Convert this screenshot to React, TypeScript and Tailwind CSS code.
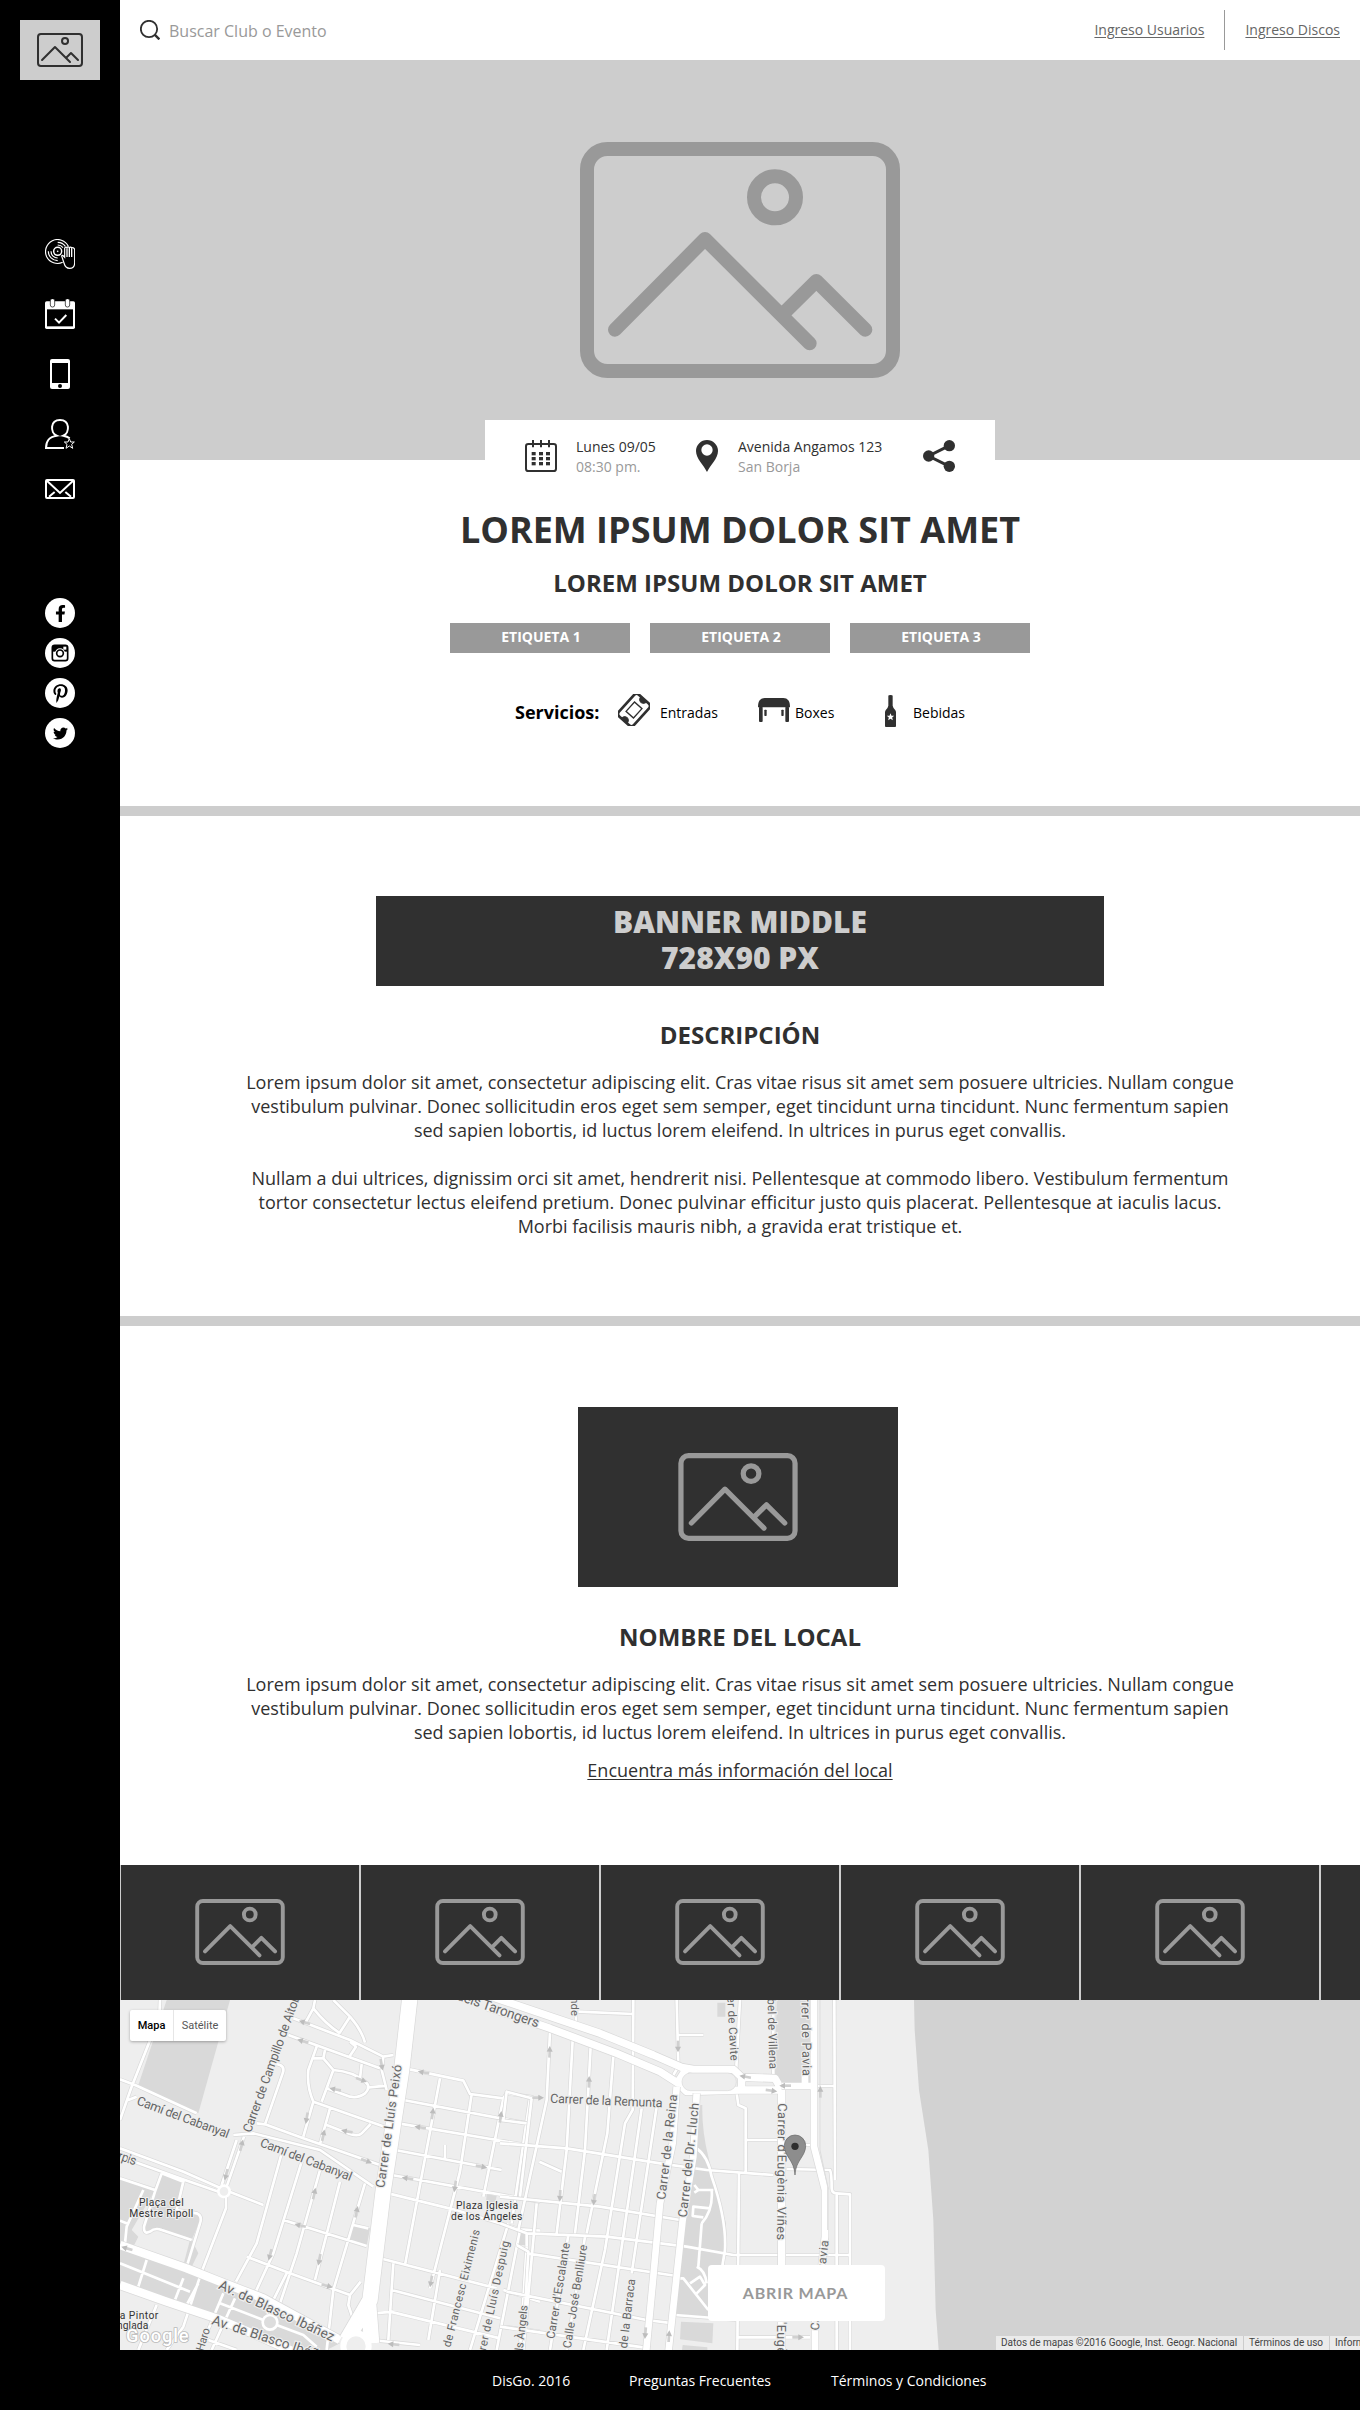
import React from "react";
import { FaFacebookF, FaPinterestP, FaTwitter } from "react-icons/fa";

function Picture({ className, stroke = 42 }: { className: string; stroke?: number }) {
  return (
    <svg viewBox="0 0 960 708" className={className} fill="none" stroke="currentColor" strokeWidth={stroke} strokeLinecap="round" strokeLinejoin="round">
      <rect x="21" y="21" width="918" height="666" rx="61" />
      <circle cx="585" cy="166" r="63" />
      <path d="M105 563L375 291L689 604M615 510L709 417L856 563" />
    </svg>
  );
}

function DiscIcon() {
  return (
    <svg viewBox="0 0 90 90" className="h-[30px] w-[30px]" fill="none" stroke="#fff" strokeWidth="3.5">
      <path d="M70 22A36 36 0 1 0 53 70" />
      <circle cx="38" cy="37" r="12" strokeWidth="4.5" />
      <circle cx="38" cy="37" r="2.5" fill="#fff" stroke="none" />
      <path d="M38 10a28 28 0 0 1 23 12M38 18a20 20 0 0 1 16 8M10 37a28 28 0 0 0 28 28M18 37a20 20 0 0 0 20 20" />
      <path d="M57 72L50 51q2-5 7 2l2 2V28q3-6 7-2 3-5 7 0 4-4 7 1 3-3 6 0 3 2 3 6v38q0 17-15 17-13 0-17-16z" fill="#000" />
      <path d="M66 28v26M73 27v27M80 28v26" strokeWidth="4" />
    </svg>
  );
}

function DateCheckIcon() {
  return (
    <svg viewBox="0 0 90 90" className="h-[30px] w-[30px]">
      <rect y="7" width="90" height="83" rx="5" fill="#fff" />
      <path d="M6 31h78v51H6z" fill="#000" />
      <rect x="16" y="-1" width="13" height="25" rx="6" fill="#fff" stroke="#000" strokeWidth="2" />
      <rect x="61" y="-1" width="13" height="25" rx="6" fill="#fff" stroke="#000" strokeWidth="2" />
      <path d="M30 59l12 12 22-23" fill="none" stroke="#fff" strokeWidth="6" />
    </svg>
  );
}

function PhoneIcon() {
  return (
    <svg viewBox="0 0 60 90" className="h-[30px] w-5">
      <rect width="60" height="90" rx="6" fill="#fff" />
      <path d="M6 12h48v60H6z" fill="#000" />
      <circle cx="30" cy="81" r="6" fill="#000" />
    </svg>
  );
}

function UserStarIcon() {
  return (
    <svg viewBox="0 0 90 90" className="h-[30px] w-[30px]" fill="none" stroke="#fff" strokeWidth="6">
      <path d="M57 87H3C3 65 12 54 35 50 15 41 15 3 45 3s30 38 10 47q12 2 19 8" />
      <path d="M73 59l4 10h11l-8 7 3 12-10-7-10 7 3-12-8-7h11z" strokeWidth="3" fill="#000" />
    </svg>
  );
}

function MailIcon() {
  return (
    <svg viewBox="0 0 90 60" className="h-5 w-[30px]" fill="none" stroke="#fff" strokeWidth="6">
      <rect x="3" y="3" width="84" height="54" rx="3" />
      <path d="M4 4l41 38L86 4M12 53l17-14M78 53L61 39" />
    </svg>
  );
}

function InstagramIcon() {
  return (
    <svg viewBox="0 0 54 54" className="h-[18px] w-[18px]">
      <rect x="4" y="4" width="46" height="46" rx="7" fill="none" stroke="#000" strokeWidth="5" />
      <path d="M4 6h46v17H4z" fill="#000" />
      <rect x="37" y="8" width="9" height="9" fill="#fff" />
      <circle cx="27" cy="28" r="15" fill="#fff" />
      <circle cx="27" cy="28" r="10" fill="none" stroke="#000" strokeWidth="5" />
    </svg>
  );
}

function Sidebar() {
  return (
    <aside className="flex w-[120px] shrink-0 flex-col items-center bg-black pt-5">
      <div className="flex h-[60px] w-20 items-center justify-center bg-[#cdcdcd] text-[#303030]">
        <Picture className="h-[34px] w-[46px]" />
      </div>
      <nav className="mt-[159px] flex flex-col items-center gap-[30px]">
        <DiscIcon />
        <DateCheckIcon />
        <PhoneIcon />
        <UserStarIcon />
        <MailIcon />
      </nav>
      <div className="mt-[99px] flex flex-col gap-2.5 text-black">
        {[<FaFacebookF size={17} />, <InstagramIcon />, <FaPinterestP size={19} />, <FaTwitter size={15} />].map((icon, i) => (
          <a key={i} className="flex h-[30px] w-[30px] items-center justify-center rounded-full bg-white">{icon}</a>
        ))}
      </div>
    </aside>
  );
}

function Header() {
  return (
    <header className="flex h-[60px] items-center bg-white px-5">
      <svg viewBox="0 0 60 60" className="h-5 w-5" fill="none" stroke="#303030" strokeWidth="5.5">
        <circle cx="27" cy="27" r="24.5" />
        <path d="M44 44l14 14" strokeWidth="7" />
      </svg>
      <span className="ml-[9px] pt-0.5 text-base text-[#999]">Buscar Club o Evento</span>
      <div className="ml-auto flex items-center text-sm text-[#666]">
        <a className="underline underline-offset-2">Ingreso Usuarios</a>
        <span className="mx-5 h-10 w-px bg-[#999]" />
        <a className="underline underline-offset-2">Ingreso Discos</a>
      </div>
    </header>
  );
}

function CalendarIcon() {
  return (
    <svg viewBox="0 0 96 96" className="h-8 w-8 shrink-0" fill="none" stroke="#303030" strokeWidth="6">
      <rect x="3" y="12" width="90" height="81" rx="7" />
      <path d="M24 0v22M48 0v22M72 0v22" />
      <g fill="#303030" stroke="none">
        {[20, 42, 63].map((x) => [36, 51, 66].map((y) => <rect key={x + "-" + y} x={x} y={y} width="12" height="10" />))}
      </g>
    </svg>
  );
}

function PinIcon() {
  return (
    <svg viewBox="0 0 66 96" className="h-8 w-[22px] shrink-0">
      <path d="M33 0A33 33 0 0 0 0 33C0 56 23 75 33 96 43 75 66 56 66 33A33 33 0 0 0 33 0zM33 13a17 17 0 1 1 0 34 17 17 0 0 1 0-34z" fill="#303030" />
    </svg>
  );
}

function ShareIcon() {
  return (
    <svg viewBox="0 0 96 96" className="h-8 w-8 shrink-0" fill="#303030">
      <path d="M79 17L17 48l62 31" fill="none" stroke="#303030" strokeWidth="9" />
      <circle cx="79" cy="17" r="17" />
      <circle cx="17" cy="48" r="17" />
      <circle cx="79" cy="79" r="17" />
    </svg>
  );
}

function TicketIcon() {
  return (
    <svg viewBox="0 0 96 96" className="h-8 w-8 shrink-0" fill="none" stroke="#303030">
      <g transform="rotate(-48 48 48)">
        <rect x="4" y="18" width="88" height="60" rx="10" strokeWidth="8" />
        <path d="M6 37a11 11 0 0 1 0 22zM90 37a11 11 0 0 0 0 22z" fill="#303030" strokeWidth="3" />
        <rect x="29" y="33" width="38" height="30" strokeWidth="4" />
      </g>
    </svg>
  );
}

function TableIcon() {
  return (
    <svg viewBox="0 0 96 72" className="h-6 w-8 shrink-0" fill="#303030">
      <path d="M20 0h56q10 0 15 7 5 6 5 21H0Q0 13 5 7 10 0 20 0z" />
      <rect x="3" y="26" width="11" height="46" rx="3" />
      <rect x="19" y="35" width="7" height="19" rx="2" />
      <rect x="70" y="35" width="7" height="19" rx="2" />
      <rect x="82" y="26" width="11" height="46" rx="3" />
    </svg>
  );
}

function BottleIcon() {
  return (
    <svg viewBox="0 0 33 96" className="relative top-px h-8 w-[11px] shrink-0">
      <path d="M10 2q0-2 6.500-2T23 2v30q1 6 7 12 3 4 3 8v42q0 2-3 2H3q-3 0-3-2V52q0-4 3-8 6-6 7-12z" fill="#303030" />
      <path d="M16.500 55l3 7 8 .5-6 5 2 8-7-4.500-7 4.500 2-8-6-5 8-.5z" fill="#fff" />
    </svg>
  );
}

const para1 = [
  "Lorem ipsum dolor sit amet, consectetur adipiscing elit. Cras vitae risus sit amet sem posuere ultricies. Nullam congue",
  "vestibulum pulvinar. Donec sollicitudin eros eget sem semper, eget tincidunt urna tincidunt. Nunc fermentum sapien",
  "sed sapien lobortis, id luctus lorem eleifend. In ultrices in purus eget convallis.",
];
const para2 = [
  "Nullam a dui ultrices, dignissim orci sit amet, hendrerit nisi. Pellentesque at commodo libero. Vestibulum fermentum",
  "tortor consectetur lectus eleifend pretium. Donec pulvinar efficitur justo quis placerat. Pellentesque at iaculis lacus.",
  "Morbi facilisis mauris nibh, a gravida erat tristique et.",
];

function Paragraph({ lines }: { lines: string[] }) {
  return (
    <p className="text-center text-lg leading-6 whitespace-nowrap">
      {lines.map((l) => <span key={l} className="block">{l}</span>)}
    </p>
  );
}

function EventInfo() {
  return (
    <section className="flex h-[346px] flex-col items-center">
      <div className="z-10 -mt-10 flex h-20 w-[510px] shrink-0 items-start bg-white px-10 pt-5 text-sm leading-5">
        <CalendarIcon />
        <div className="-mt-[3px] ml-[19px] w-[120px]">
          <p>Lunes 09/05</p>
          <p className="text-[#999]">08:30 pm.</p>
        </div>
        <PinIcon />
        <div className="-mt-[3px] ml-5 whitespace-nowrap">
          <p>Avenida Angamos 123</p>
          <p className="text-[#999]">San Borja</p>
        </div>
        <div className="ml-auto"><ShareIcon /></div>
      </div>
      <h1 className="mt-2.5 text-4xl leading-10 font-bold whitespace-nowrap">LOREM IPSUM DOLOR SIT AMET</h1>
      <h2 className="mt-[17px] text-2xl leading-8 font-bold whitespace-nowrap">LOREM IPSUM DOLOR SIT AMET</h2>
      <div className="mt-6 flex gap-5">
        {["ETIQUETA 1", "ETIQUETA 2", "ETIQUETA 3"].map((t) => (
          <span key={t} className="h-[30px] w-[180px] bg-[#999] pl-0.5 text-center text-sm leading-7 font-bold text-white">{t}</span>
        ))}
      </div>
      <div className="mt-[41px] flex h-8 w-[450px] items-center text-sm text-black">
        <span className="w-[103px] shrink-0 pt-[3px] text-lg leading-6 font-bold">Servicios:</span>
        <TicketIcon />
        <span className="ml-2.5 w-[98px] shrink-0 pt-[5px]">Entradas</span>
        <TableIcon />
        <span className="ml-[5px] w-[90px] shrink-0 pt-[5px]">Boxes</span>
        <BottleIcon />
        <span className="ml-[17px] pt-[5px]">Bebidas</span>
      </div>
    </section>
  );
}

type LabelProps = { from: [number, number]; to: [number, number]; text: string; size?: number };

function Street({ from, to, text, size = 38 }: LabelProps) {
  const dx = to[0] - from[0];
  const dy = to[1] - from[1];
  return (
    <text
      transform={`translate(${from[0]} ${from[1]}) rotate(${(Math.atan2(dy, dx) * 180) / Math.PI})`}
      textLength={Math.hypot(dx, dy)}
      fontSize={size}
      fill="#666"
      stroke="#eee"
      strokeWidth="7"
      paintOrder="stroke"
    >
      {text}
    </text>
  );
}

function Roads({ d, width, casing = 4 }: { d: string; width: number; casing?: number }) {
  return (
    <g fill="none" strokeLinejoin="round">
      <path d={d} stroke="#d9d9d9" strokeWidth={width + casing} />
      <path d={d} stroke="#fff" strokeWidth={width} />
    </g>
  );
}

function Arrow({ x, y, angle }: { x: number; y: number; angle: number }) {
  return (
    <g transform={`translate(${x} ${y}) rotate(${angle})`}>
      <path d="M-18-4H2v8h-20z" fill="#d0d0d0" />
      <path d="M0-9L17 0 0 9z" fill="#bdbdbd" />
    </g>
  );
}

const minorLeft =
  "M120 30L118 80 35 290 0 390M0 268L45 285 230 370M25 330L50 320M0 475L190 545 315 600 430 645M0 500L180 565 300 607M0 565L105 600M125 550L105 605 72 710Q70 735 90 725 105 712 125 720L215 750M125 550L190 575 170 660 230 670Q248 678 240 700L200 830M70 600L20 710 15 760M0 692L25 702" +
  "M585 30L580 55Q615 100 660 130M580 55L558 95M640 30L690 80Q725 120 735 158M690 80L658 130M520 85L690 150 790 200 820 195M505 135L780 235M690 155L708 170 688 200M690 150L705 168M790 200L785 240 800 300M590 170L565 240Q560 290 580 335L550 440M615 180L610 205 640 240 605 335M610 205L580 205M640 240Q700 245 735 275 755 290 735 310 715 325 690 320L620 295M725 222L720 265M740 293L800 287M580 335L815 418M630 355L600 462M620 405L690 432Q715 440 725 430L752 402" +
  "M445 215L480 225Q495 232 488 250L435 403 550 445 780 525M410 400L435 403M340 435L400 430 600 480 760 590M372 440L320 590M350 450L305 585M318 620V655L245 845 190 1010 140 1080M485 490L410 760 348 875M545 515L460 790 405 910M600 540L530 790 480 940M660 575L585 870M735 580L640 900 620 1080M490 690L740 768M380 800L510 850 690 915 722 875M500 850L440 970M690 915L685 945 700 990M300 940L430 990 550 1035 590 1070M345 925L275 1080M310 910L210 1150M80 810L55 890M190 865L165 930M235 880L200 945M0 820L210 905M110 945L55 1080M265 1050L350 1080M700 705L745 715" +
  "M855 235L1030 272 1050 312 1150 325 1160 310 1240 322M850 330L1220 400M835 400L1260 472M825 480L1145 540M815 555L1260 635M805 610L1000 658 1200 718 1260 722M780 805L1130 895M960 265L855 825M1055 312L1020 545 930 895M975 505V465M1150 325L1090 620M1230 325L1175 700M820 820L805 1050M815 900L1140 985M810 965L1140 1045M760 970L820 965M755 1050L900 1065M960 840L925 1050M1165 700L1050 1080M1200 720L1130 1080M1220 770L1200 1080M1150 900L1260 935M1150 1010L1260 1025M710 1000L730 1000";

const minorRight =
  "M235 65L400 72M228 30V100M400 30L398 360 375 400 315 780 250 1080M150 125L140 330 55 720M218 150L200 480 170 730M272 170L255 480 225 730M340 200L322 430 260 730M425 355L390 600 320 1080M470 350L395 850M0 390L80 400M10 390L20 305 95 325 60 620M0 460L200 475 480 520 620 540 820 555M118 515L185 545M0 620L300 650 540 690M0 700L80 730 320 740 560 770 700 795H1050M50 765L85 785 75 960M80 790L530 858M20 905L440 990 520 1000M0 1010L450 1075M80 730V770M205 735L150 1080M255 740L200 1080M110 640L70 1080M530 30L535 230 520 255M535 135H610M710 310L715 345 737 355V545M740 450H840M717 545L712 1080M715 1042H930M590 475Q625 500 635 560 680 690 675 780L665 840M640 600L595 600 583 585M598 598L583 608M635 600Q640 660 605 700M630 655L580 650 578 678 610 682M605 700L595 830M535 865L550 865 625 960M570 880L600 860 615 885 590 910M590 830Q615 840 620 880M525 975L720 990M890 465H940M860 537L990 540Q995 550 995 595 995 610 1010 610L1050 613V1080M1003 30L1005 570M1010 610V1080M940 288H1003M720 30L708 250M820 30V270";

function CityMap() {
  return (
    <svg viewBox="0 30 3720 1050" className="block h-[350px] w-[1240px] font-['Roboto',sans-serif]">
      <rect y="30" width="3720" height="1050" fill="#eee" />
      <g fill="#d9d9d9">
        <path d="M140 30H330L235 370 55 285z" />
        <path d="M0 565L105 600 35 720 55 740 40 770 0 765z" />
        <path d="M125 550L190 575 175 660 245 680 215 750 235 790 215 830 190 825 210 750 105 715 70 730z" />
        <path d="M0 775L300 880 520 975 660 1060 620 1080 520 1080 280 985 0 880z" />
        <path d="M700 705L750 715 740 768 690 750zM1200 720H1220V765H1195zM1100 612L1130 618 1125 640 1098 635z" />
      </g>
      <g transform="translate(1140 0)" fill="#d9d9d9">
        <path d="M830 30H932V280H850L825 255z" />
        <path d="M598 345H607Q605 420 625 500 650 620 678 700L670 840 625 960 625 985 520 972 550 700 580 500z" />
        <path d="M652 38h24v42h-24zM543 995L640 1000 637 1060 540 1048zM548 1065L622 1072V1080H546z" />
      </g>
      <path d="M2382 30L2384 120 2397 300 2425 480 2440 690 2447 960 2456 1080H3720V30z" fill="#d2d2d2" />
      <Roads d={minorLeft} width={8} />
      <g transform="translate(1140 0)"><Roads d={minorRight} width={8} /></g>
      <circle cx="312" cy="604" r="17" fill="#eee" stroke="#fff" strokeWidth="8" />
      <circle cx="450" cy="997" r="22" fill="#ddd" stroke="#fff" strokeWidth="8" />
      <Roads d="M0 765L200 835 300 875 430 925 540 985 660 1050M0 885L140 935 290 985 420 1040 520 1085" width={25} />
      <Roads d="M870 20L845 240 790 600 750 930 680 1050M745 930L755 1060" width={46} />
      <circle cx="708" cy="1068" r="38" fill="#eee" stroke="#fff" strokeWidth="18" />
      <g transform="translate(1140 0)">
        <Roads d="M-40 15L300 130 460 195 545 232 580 238H700L725 262 825 265 845 300V1090M-40 50L150 115 350 190 480 245 535 280 560 305 720 300 840 300M725 262V300M560 235L535 275" width={22} />
        <rect x="546" y="249" width="163" height="53" rx="26" fill="#eee" stroke="#d9d9d9" strokeWidth="2" />
        <Roads d="M530 290L518 460 480 640 460 860 438 1090M590 310L580 500 548 690 505 1090" width={20} />
        <Roads d="M942 20V470L975 600V740L945 1000V1090M915 250V288M845 288H942" width={20} />
        <path d="M960 30V480L983 590V720" fill="none" stroke="#ddd" strokeWidth="3" />
      </g>
      <Arrow x={553} y={97} angle={196} />
      <Arrow x={548} y={153} angle={196} />
      <Arrow x={785} y={225} angle={80} />
      <Arrow x={725} y={270} angle={20} />
      <Arrow x={645} y={298} angle={190} />
      <Arrow x={560} y={385} angle={100} />
      <Arrow x={610} y={435} angle={-78} />
      <Arrow x={680} y={424} angle={190} />
      <Arrow x={740} y={513} angle={20} />
      <Arrow x={365} y={465} angle={-75} />
      <Arrow x={318} y={555} angle={105} />
      <Arrow x={583} y={610} angle={-78} />
      <Arrow x={710} y={665} angle={-78} />
      <Arrow x={540} y={706} angle={193} />
      <Arrow x={450} y={795} angle={105} />
      <Arrow x={598} y={810} angle={100} />
      <Arrow x={622} y={888} angle={15} />
      <Arrow x={910} y={247} angle={190} />
      <Arrow x={938} y={370} angle={-82} />
      <Arrow x={900} y={412} angle={188} />
      <Arrow x={1142} y={380} angle={-82} />
      <Arrow x={1085} y={530} angle={10} />
      <Arrow x={862} y={565} angle={188} />
      <Arrow x={1005} y={590} angle={98} />
      <Arrow x={933} y={875} angle={100} />
      <Arrow x={820} y={1063} angle={185} />
      <Arrow x={20} y={775} angle={196} />
      <Arrow x={1255} y={323} angle={0} />
      <Arrow x={1289} y={185} angle={-88} />
      <Arrow x={1407} y={275} angle={-88} />
      <Arrow x={1674} y={170} angle={90} />
      <Arrow x={1320} y={618} angle={93} />
      <Arrow x={1422} y={630} angle={98} />
      <Arrow x={1576} y={1030} angle={95} />
      <Arrow x={1647} y={1038} angle={-86} />
      <Arrow x={1875} y={260} angle={190} />
      <Arrow x={1955} y={302} angle={8} />
      <Arrow x={1995} y={287} angle={180} />
      <Arrow x={2101} y={305} angle={-90} />
      <Arrow x={2035} y={1042} angle={0} />

      <Street from={[392, 430]} to={[541, 20]} text="Carrer de Campillo de Altob" />
      <Street from={[793, 595]} to={[845, 226]} text="Carrer de Lluís Peixó" />
      <Street from={[48, 343]} to={[322, 445]} text="Camí del Cabanyal" />
      <Street from={[418, 468]} to={[690, 573]} text="Camí del Cabanyal" />
      <Street from={[293, 895]} to={[636, 1055]} text="Av. de Blasco Ibáñez" size={41} />
      <Street from={[273, 1002]} to={[630, 1120]} text="Av. de Blasco Ibáñez" size={41} />
      <Street from={[-8, 508]} to={[45, 526]} text="rpis" />
      <Street from={[1008, 28]} to={[1252, 113]} text="dels Tarongers" size={41} />
      <Street from={[964, 1180]} to={[1080, 722]} text="Carrer de Francesc Eiximenis" size={34} />
      <Street from={[1085, 1140]} to={[1168, 755]} text="Carrer de Lluís Despuig" size={34} />
      <Street from={[1204, 1120]} to={[1223, 947]} text="dels Àngels" size={34} />
      <Street from={[250, 1085]} to={[270, 1018]} text="Haro" size={34} />
      <g transform="translate(1140 0)">
        <Street from={[150, 338]} to={[487, 352]} text="Carrer de la Remunta" />
        <Street from={[496, 630]} to={[532, 315]} text="Carrer de la Reina" />
        <Street from={[560, 683]} to={[597, 340]} text="Carrer del Dr. Lluch" />
        <Street from={[834, 340]} to={[831, 750]} text="Carrer d'Eugènia Viñes" />
        <Street from={[831, 850]} to={[831, 1260]} text="Carrer d'Eugènia Viñes" />
        <Street from={[904, 0]} to={[908, 258]} text="arrer de Pavia" />
        <Street from={[802, 6]} to={[808, 237]} text="abel de Villena" size={35} />
        <Street from={[680, -5]} to={[692, 213]} text="rrer de Cavite" size={35} />
        <Street from={[214, 22]} to={[214, 78]} text="nde" size={34} />
        <Street from={[956, 1022]} to={[986, 752]} text="Carrer de Pavia" size={36} />
        <Street from={[163, 1048]} to={[210, 760]} text="Carrer d'Escalante" size={35} />
        <Street from={[212, 1076]} to={[262, 766]} text="Calle José Benlliure" size={35} />
        <Street from={[381, 1076]} to={[406, 868]} text="de la Barraca" size={35} />
      </g>
      <g fontSize="31" fill="#333" stroke="#eee" strokeWidth="6" paintOrder="stroke" textAnchor="middle">
        <text x="124" y="647" textLength="134">Plaça del</text>
        <text x="124" y="680" textLength="192">Mestre Ripoll</text>
        <text x="1101" y="656" textLength="186">Plaza Iglesia</text>
        <text x="1100" y="689" textLength="214">de los Ángeles</text>
        <text x="57" y="986" textLength="116">a Pintor</text>
        <text x="38" y="1018" textLength="94">nglada</text>
      </g>
      <text x="18" y="1056" fontSize="55" fontWeight="500" fill="#fff" stroke="#bbb" strokeWidth="5" paintOrder="stroke" textLength="188">Google</text>
      <g transform="translate(2025 435)">
        <path d="M0 120C-2 75-32 65-32 32a32 32 0 0 1 64 0C32 65 2 75 0 120z" fill="#8d8d8d" stroke="#666" strokeWidth="2" />
        <circle cy="34" r="11" fill="#2e2e2e" />
      </g>
    </svg>
  );
}

function MapPanel() {
  return (
    <section className="relative h-[350px] overflow-hidden">
      <CityMap />
      <div className="absolute top-2.5 left-2.5 flex h-[31px] w-24 rounded-[2px] bg-white font-['Roboto',sans-serif] text-[11px] leading-[31px] text-[#565656] shadow-[0_1px_3px_rgba(0,0,0,0.3)]">
        <b className="w-11 border-r border-[#e6e6e6] text-center font-medium text-black">Mapa</b>
        <span className="flex-1 text-center">Satélite</span>
      </div>
      <button className="absolute top-[265px] left-[588px] h-14 w-[177px] rounded-[4px] bg-white pr-0.5 pb-px text-center font-['Lato',sans-serif] text-base font-bold tracking-[0.8px] text-[#999]">ABRIR MAPA</button>
      <div className="absolute bottom-0 left-[876px] flex h-3.5 bg-[#ebebeb] font-['Roboto',sans-serif] text-[10px] leading-3.5 whitespace-nowrap text-[#444]">
        <span className="w-[247px] pl-[5px]">Datos de mapas ©2016 Google, Inst. Geogr. Nacional</span>
        <span className="w-[86px] border-l border-[#ccc] pl-[5px]">Términos de uso</span>
        <span className="border-l border-[#ccc] pl-[5px]">Informar</span>
      </div>
    </section>
  );
}

export default function App() {
  return (
    <div className="w-[1360px] bg-white font-['Open_Sans',sans-serif] text-[#303030]">
      <div className="flex h-[2350px]">
        <Sidebar />
        <main className="w-[1240px] overflow-hidden">
          <Header />
          <div className="flex h-[400px] items-center justify-center bg-[#cdcdcd] text-[#999]">
            <Picture className="h-[236px] w-80" />
          </div>
          <EventInfo />
          <hr className="h-2.5 border-0 bg-[#cdcdcd]" />
          <section className="flex h-[500px] flex-col items-center pt-20">
            <div className="h-[90px] w-[728px] shrink-0 bg-[#303030] pt-2 text-center text-3xl leading-9 font-extrabold text-[#cdcdcd]">
              BANNER MIDDLE<br />728X90 PX
            </div>
            <h2 className="mt-[33px] mb-[19px] text-2xl leading-8 font-bold">DESCRIPCIÓN</h2>
            <Paragraph lines={para1} />
            <div className="h-6" />
            <Paragraph lines={para2} />
          </section>
          <hr className="h-2.5 border-0 bg-[#cdcdcd]" />
          <section className="flex h-[539px] flex-col items-center pt-[81px]">
            <div className="mr-1 flex h-[180px] w-80 shrink-0 items-center justify-center bg-[#303030] text-[#999]">
              <Picture className="h-[88px] w-[120px]" />
            </div>
            <h2 className="mt-[34px] mb-[19px] text-2xl leading-8 font-bold">NOMBRE DEL LOCAL</h2>
            <Paragraph lines={para1} />
            <a className="mt-3.5 text-lg leading-6 underline underline-offset-2">Encuentra más información del local</a>
          </section>
          <div className="flex h-[135px] gap-0.5 overflow-hidden bg-[#cdcdcd] pl-px">
            {[0, 1, 2, 3, 4, 5].map((i) => (
              <div key={i} className="flex w-[238px] shrink-0 items-center justify-center bg-[#303030] pb-px text-[#999]">
                <Picture className="h-[66px] w-[90px]" />
              </div>
            ))}
          </div>
          <MapPanel />
        </main>
      </div>
      <footer className="flex h-[60px] items-center bg-black pt-0.5 pl-[492px] text-sm text-white">
        <span className="w-[137px]">DisGo. 2016</span>
        <span className="w-[202px]">Preguntas Frecuentes</span>
        <span>Términos y Condiciones</span>
      </footer>
    </div>
  );
}
